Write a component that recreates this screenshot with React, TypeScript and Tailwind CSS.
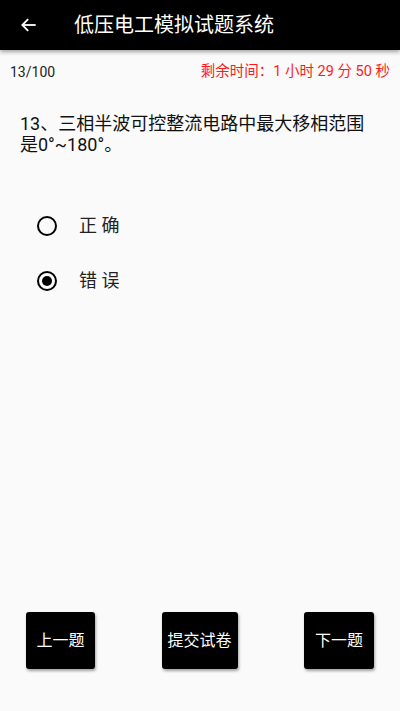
import React, { useState } from 'react';

const font = { fontFamily: 'Roboto, "Noto Sans CJK SC", sans-serif' };

const options = ['正 确', '错 误'];

const App: React.FC = () => {
    const [picked, setPicked] = useState(1);

    return (
        <div className="w-[400px] h-[711px] bg-[#fafafa] flex flex-col" style={font}>
            <div className="h-[50px] bg-black flex items-center shadow-[0_2px_4px_rgba(0,0,0,0.35)] relative z-10">
                <svg className="ml-[19px] w-[20px] h-[20px]" viewBox="0 0 24 24" fill="none" stroke="white" strokeWidth="2.2">
                    <path d="M20 12H4.5" />
                    <path d="M11 5l-7 7 7 7" />
                </svg>
                <p className="ml-[35px] text-white text-[20px] leading-none">低压电工模拟试题系统</p>
            </div>

            <div className="flex justify-between items-center px-[10px] pt-[12px] text-[14px] leading-[20px]">
                <span className="text-[#222]">13/100</span>
                <span className="text-[#ff1a1a] text-[14.5px]">剩余时间：1 小时 29 分 50 秒</span>
            </div>

            <p className="mt-[31px] px-[20px] text-[18px] leading-[21px] text-[#111]">
                13、三相半波可控整流电路中最大移相范围是0°~180°。
            </p>

            <div className="mt-[61px] flex flex-col gap-[35px]">
                {options.map((opt, i) => (
                    <div key={opt} className="flex items-center h-[20px] pl-[37px] cursor-pointer" onClick={() => setPicked(i)}>
                        <div className="w-[20px] h-[20px] rounded-full border-2 border-black flex items-center justify-center">
                            {picked === i && <div className="w-[10px] h-[10px] rounded-full bg-black"></div>}
                        </div>
                        <span className="ml-[22px] text-[18px] text-[#222] leading-none">{opt}</span>
                    </div>
                ))}
            </div>

            <div className="flex-1"></div>

            <div className="flex justify-between px-[26px] mb-[42px]">
                <button className="w-[69px] h-[57px] bg-black text-white text-[16px] rounded-[3px] shadow-[1px_2px_3px_rgba(0,0,0,0.35)]">上一题</button>
                <button className="w-[76px] h-[57px] bg-black text-white text-[16px] rounded-[3px] shadow-[1px_2px_3px_rgba(0,0,0,0.35)]">提交试卷</button>
                <button className="w-[70px] h-[57px] bg-black text-white text-[16px] rounded-[3px] shadow-[1px_2px_3px_rgba(0,0,0,0.35)]">下一题</button>
            </div>
        </div>
    );
};

export default App;
